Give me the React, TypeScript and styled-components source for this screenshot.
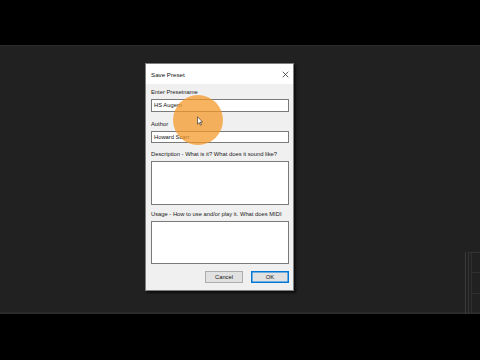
import React from 'react';
import styled, { createGlobalStyle } from 'styled-components';

const GlobalStyle = createGlobalStyle`
  html, body {
    margin: 0;
    padding: 0;
    background: #000;
  }
  * {
    box-sizing: border-box;
  }
`;

const Page = styled.div`
  width: 480px;
  height: 360px;
  display: flex;
  flex-direction: column;
  background: #000;
  overflow: hidden;
  font-family: "Liberation Sans", Arial, sans-serif;
`;

const Letterbox = styled.div<{ h: number }>`
  height: ${(p) => p.h}px;
  background: #000;
  flex: none;
`;

const Stage = styled.div`
  position: relative;
  flex: none;
  height: 269px;
  background: #212121;
  border-top: 1px solid #2c2c2c;
  border-bottom: 2px solid #2a2a2a;
  padding: 17px 0 0 145px;
`;

const SidePanel = styled.div`
  position: absolute;
  left: 465px;
  top: 206px;
  width: 20px;
  height: 62px;
  border-left: 1px solid #3a3a3a;
  padding-left: 2px;
`;

const SideInner = styled.div`
  height: 100%;
  border-left: 1px solid #343434;
  border-top: 1px solid #343434;
  display: flex;
  flex-direction: column;
  padding-left: 2px;
`;

const SideRow = styled.div`
  flex: 1;
  border-bottom: 1px solid #2f2f2f;
  border-left: 1px solid #2f2f2f;
`;

const Dialog = styled.div`
  position: relative;
  width: 149px;
  height: 228px;
  background: #f0f0f0;
  border: 1px solid #7f7f7f;
  box-shadow: 2px 2px 2px rgba(0, 0, 0, 0.6);
  display: flex;
  flex-direction: column;
`;

const TitleBar = styled.div`
  height: 20px;
  background: #fff;
  display: flex;
  align-items: center;
  justify-content: space-between;
  padding: 1px 4px 0 5px;
  flex: none;
`;

const Title = styled.span`
  font-size: 6.2px;
  color: #111;
`;

const CloseIcon = styled.svg`
  width: 7px;
  height: 7px;
`;

const Body = styled.div`
  flex: 1;
  display: flex;
  flex-direction: column;
  padding: 4px 4px 6px 5px;
`;

const Label = styled.div<{ top: number }>`
  font-size: 5.8px;
  line-height: 8px;
  height: 8px;
  color: #1a1a1a;
  white-space: nowrap;
  margin-top: ${(p) => p.top}px;
  margin-bottom: 3px;
`;

const Field = styled.div<{ h: number }>`
  height: ${(p) => p.h}px;
  background: #fff;
  border: 1px solid #7a7a7a;
  font-size: 5.8px;
  line-height: ${(p) => p.h - 2}px;
  color: #111;
  padding-left: 2px;
`;

const ButtonRow = styled.div`
  margin-top: 7px;
  display: flex;
  justify-content: flex-end;
  gap: 8px;
`;

const Button = styled.div<{ primary?: boolean }>`
  width: 38px;
  height: 12px;
  background: #e1e1e1;
  border: 1px solid ${(p) => (p.primary ? '#0078d7' : '#adadad')};
  box-shadow: ${(p) => (p.primary ? 'inset 0 0 0 0.5px #0078d7' : 'none')};
  font-size: 5.8px;
  line-height: 10px;
  text-align: center;
  color: #111;
`;

const Highlight = styled.div`
  position: absolute;
  left: 27px;
  top: 31px;
  width: 50px;
  height: 50px;
  border-radius: 50%;
  background: rgba(245, 152, 40, 0.74);
  pointer-events: none;
`;

const Cursor = styled.svg`
  position: absolute;
  left: 51px;
  top: 52px;
  width: 6px;
  height: 10px;
`;

export default function App() {
  return (
    <>
      <GlobalStyle />
      <Page>
        <Letterbox h={45} />
        <Stage>
          <Dialog>
            <TitleBar>
              <Title>Save Preset</Title>
              <CloseIcon viewBox="0 0 10 10">
                <path d="M1 1 L9 9 M9 1 L1 9" stroke="#333" strokeWidth="1.1" />
              </CloseIcon>
            </TitleBar>
            <Body>
              <Label top={0}>Enter Presetname</Label>
              <Field h={13}>HS Augern</Field>
              <Label top={8}>Author</Label>
              <Field h={12}>Howard Scarr</Field>
              <Label top={7}>Description - What is it? What does it sound like?</Label>
              <Field h={44} />
              <Label top={5}>Usage - How to use and/or play it. What does MIDI</Label>
              <Field h={43} />
              <ButtonRow>
                <Button>Cancel</Button>
                <Button primary>OK</Button>
              </ButtonRow>
            </Body>
            <Highlight />
            <Cursor viewBox="0 0 12 19">
              <path
                d="M1 1 L1 16 L4.5 12.5 L7 18 L9 17 L6.5 11.5 L11 11.5 Z"
                fill="#fff"
                stroke="#000"
                strokeWidth="1"
                strokeLinejoin="round"
              />
            </Cursor>
          </Dialog>
          <SidePanel>
            <SideInner>
              <SideRow />
              <SideRow />
              <SideRow />
            </SideInner>
          </SidePanel>
        </Stage>
        <Letterbox h={43} />
      </Page>
    </>
  );
}
